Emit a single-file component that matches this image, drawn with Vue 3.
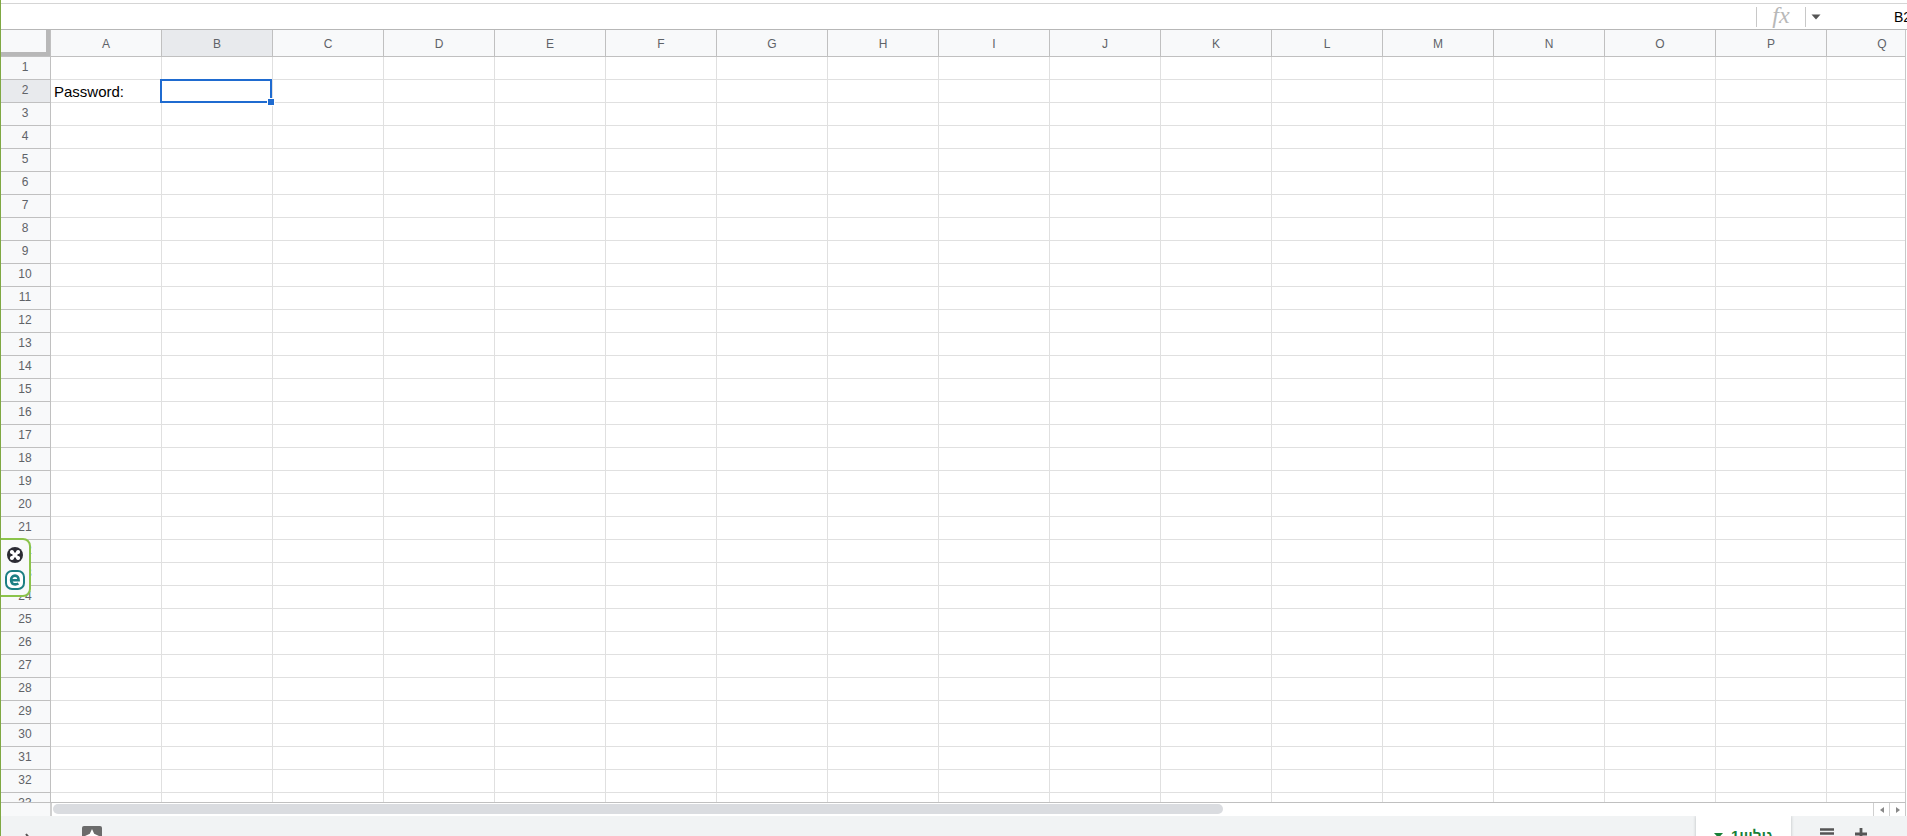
<script setup>
import { ref } from 'vue'

const columns = 'ABCDEFGHIJKLMNOPQ'.split('')
const rows = Array.from({ length: 33 }, (_, i) => i + 1)
const values = { A2: 'Password:' }
const selected = ref({ col: 'B', row: 2 })
const isSelected = (c, r) => selected.value.col === c && selected.value.row === r
</script>

<template>
  <div class="app">
    <header class="formula-bar">
      <input class="formula-input" type="text" aria-label="Formula" />
      <span class="fx">fx</span>
      <div class="name-box">
        <button class="name-toggle" type="button" aria-label="Named ranges">
          <svg width="10" height="6" viewBox="0 0 10 6"><path d="M0.5 0.5h9L5 5.5z" fill="#555" /></svg>
        </button>
        <span class="name">{{ selected.col }}{{ selected.row }}</span>
      </div>
    </header>

    <main class="sheet">
      <table>
        <colgroup>
          <col class="index-col" />
          <col v-for="c in columns" :key="c" class="data-col" />
        </colgroup>
        <thead>
          <tr>
            <td class="corner"></td>
            <th v-for="c in columns" :key="c" scope="col" :class="{ active: c === selected.col }">{{ c }}</th>
          </tr>
        </thead>
        <tbody>
          <tr v-for="r in rows" :key="r">
            <th scope="row" :class="{ active: r === selected.row }">{{ r }}</th>
            <td v-for="c in columns" :key="c" @click="selected = { col: c, row: r }">
              {{ values[c + r] }}
              <span v-if="isSelected(c, r)" class="selection"></span>
            </td>
          </tr>
        </tbody>
      </table>
    </main>

    <div class="scroll-row">
      <div class="scroll-corner"></div>
      <div class="track"><div class="thumb"></div></div>
      <button type="button" aria-label="Scroll left">
        <svg width="4" height="6" viewBox="0 0 4 6"><path d="M4 0v6L0 3z" fill="#888" /></svg>
      </button>
      <button type="button" aria-label="Scroll right">
        <svg width="4" height="6" viewBox="0 0 4 6"><path d="M0 0v6l4-3z" fill="#888" /></svg>
      </button>
    </div>

    <footer class="tabs">
      <button class="icon collapse" type="button" aria-label="Show side panel">
        <svg width="8" height="12" viewBox="0 0 8 12"><path d="M2 1l4 5-4 5" fill="none" stroke="#555" stroke-width="2" /></svg>
      </button>
      <button class="icon explore" type="button" aria-label="Explore">
        <svg width="20" height="20" viewBox="0 0 20 20">
          <path d="M2 0h16a2 2 0 0 1 2 2v16a2 2 0 0 1-2 2H2a2 2 0 0 1-2-2V2a2 2 0 0 1 2-2z" fill="#6b6b6b" />
          <path d="M10 3l2.200 4.800L17 10l-4.800 2.200L10 17l-2.200-4.800L3 10l4.800-2.200z" fill="#fff" />
        </svg>
      </button>
      <span class="spacer"></span>
      <button class="tab" type="button" dir="rtl" lang="he">
        <span>גיליון1</span>
        <svg width="9" height="5" viewBox="0 0 9 5"><path d="M0 0h9L4.500 5z" fill="#188038" /></svg>
      </button>
      <button class="icon all" type="button" aria-label="All sheets">
        <svg width="14" height="15" viewBox="0 0 14 15"><path d="M0 1.500h14M0 5.500h14M0 9.500h14M0 13.500h14" stroke="#555" stroke-width="2.600" /></svg>
      </button>
      <button class="icon add" type="button" aria-label="Add sheet">
        <svg width="12" height="12" viewBox="0 0 12 12"><path d="M6 0v12M0 6h12" stroke="#555" stroke-width="2.800" /></svg>
      </button>
    </footer>

    <aside class="widget">
      <button type="button" aria-label="Close">
        <svg width="16" height="16" viewBox="0 0 16 16">
          <circle cx="8" cy="8" r="8" fill="#2b2b33" />
          <path d="M5 5l6 6M11 5l-6 6" stroke="#fff" stroke-width="3" stroke-linecap="round" />
          <path d="M4.900 4.900h0M11.100 4.900h0M4.900 11.100h0M11.100 11.100h0" stroke="#fff" stroke-width="4" stroke-linecap="round" />
        </svg>
      </button>
      <button type="button" aria-label="Extension">
        <svg width="20" height="20" viewBox="0 0 20 20">
          <rect x="1" y="1" width="18" height="18" rx="6" fill="#fff" stroke="#1b7f83" stroke-width="2" />
          <path d="M6.200 10.200h7.400c0-3-1.400-4.600-3.600-4.600-2.300 0-3.900 1.700-3.900 4.400 0 2.800 1.600 4.400 4.100 4.400 1.300 0 2.300-.3 3.200-.9" fill="none" stroke="#1b7f83" stroke-width="2.600" />
        </svg>
      </button>
    </aside>
  </div>
</template>

<style>
body {
  margin: 0;
}
</style>

<style scoped>
.app {
  position: relative;
  box-sizing: border-box;
  display: flex;
  flex-direction: column;
  height: 100vh;
  overflow: hidden;
  border-left: 1px solid #7fa843;
  background: #fff;
  font-family: "Liberation Sans", Arial, sans-serif;
}
button {
  border: 0;
  padding: 0;
  background: none;
  font: inherit;
  display: flex;
  align-items: center;
  justify-content: center;
}
svg {
  display: block;
  flex: none;
}
.formula-bar {
  flex: none;
  display: flex;
  align-items: center;
  height: 25px;
  margin-top: 3px;
  border-top: 1px solid #d5d5d5;
  border-bottom: 1px solid #b7b7b7;
}
.formula-input {
  flex: 1;
  min-width: 0;
  height: 20px;
  box-sizing: border-box;
  border: 0;
  border-right: 1px solid #c8c8c8;
  padding: 0 8px;
  outline: 0;
  font: inherit;
}
.fx {
  width: 49px;
  height: 20px;
  box-sizing: border-box;
  border-right: 1px solid #c8c8c8;
  text-align: center;
  font: italic 24px/16px "Liberation Serif", serif;
  color: #b8b8b8;
}
.name-box {
  display: flex;
  align-items: center;
  justify-content: space-between;
  width: 101px;
  overflow: hidden;
}
.name-toggle {
  width: 20px;
  height: 20px;
}
.name {
  flex: none;
  margin-right: -4px;
  font-size: 14px;
  color: #000;
}
.sheet {
  flex: 1;
  min-height: 0;
  margin-right: 1px;
  overflow: hidden;
  border-right: 1px solid #c8c8c8;
  border-bottom: 1px solid #c0c0c0;
}
table {
  table-layout: fixed;
  width: 1937px;
  border-collapse: separate;
  border-spacing: 0;
}
.index-col {
  width: 50px;
}
.data-col {
  width: 111px;
}
th,
td {
  box-sizing: border-box;
  height: 23px;
  padding: 0;
  border-right: 1px solid #e0e0e0;
  border-bottom: 1px solid #e0e0e0;
}
th {
  border-color: #c0c0c0;
  background: #f8f9fa;
  color: #5f6368;
  font-size: 12px;
  font-weight: 400;
  line-height: 20px;
}
thead th {
  padding-top: 2px;
}
tbody th {
  padding-right: 1px;
  padding-bottom: 2px;
}
thead th,
thead td {
  height: 27px;
}
.active {
  background: #e8eaed;
}
.corner {
  border-color: #c0c0c0;
  background: #f8f9fa;
  box-shadow: inset -4px -4px 0 #b8b8b8;
}
tbody td {
  position: relative;
  padding: 2px 0 0 3px;
  font-size: 15px;
  line-height: 20px;
  white-space: nowrap;
  color: #000;
}
.selection {
  position: absolute;
  z-index: 1;
  top: -1px;
  left: -2px;
  box-sizing: border-box;
  width: 112px;
  height: 24px;
  border: 2px solid #1f6bd0;
}
.selection::after {
  content: "";
  position: absolute;
  right: -5px;
  bottom: -5px;
  width: 6px;
  height: 6px;
  border: 1px solid #fff;
  background: #1f6bd0;
}
.scroll-row {
  flex: none;
  display: flex;
  height: 13px;
  margin-right: 1px;
  border-right: 1px solid #c8c8c8;
}
.scroll-corner {
  width: 49px;
  border-right: 2px solid #d0d0d0;
  background: #f8f9fa;
}
.track {
  flex: 1;
  padding: 1px 0 2px 1px;
}
.thumb {
  width: 64.3%;
  height: 10px;
  border-radius: 5px;
  background: #dadce0;
}
.scroll-row button {
  width: 16px;
  border-left: 1px solid #d0d0d0;
}
.tabs {
  flex: none;
  display: flex;
  align-items: flex-start;
  height: 20px;
  overflow: hidden;
  background: #f1f3f4;
}
.collapse {
  margin: 17px 0 0 23px;
}
.explore {
  margin: 10px 0 0 50px;
}
.spacer {
  flex: 1;
}
.tab {
  gap: 8px;
  width: 95px;
  height: 38px;
  background: #fff;
  box-shadow: 0 0 3px rgba(60, 64, 67, 0.3);
  color: #188038;
  font-size: 15px;
  font-weight: 700;
}
.all {
  margin: 12px 0 0 29px;
}
.add {
  margin: 12px 40px 0 21px;
}
.widget {
  position: absolute;
  z-index: 2;
  top: 538px;
  left: -1px;
  box-sizing: border-box;
  display: flex;
  flex-direction: column;
  align-items: center;
  gap: 7px;
  width: 31px;
  height: 59px;
  padding: 7px 0 0;
  border: 2px solid #8bc34a;
  border-left-width: 1px;
  border-radius: 0 8px 8px 0;
  background: #f8f9fa;
}
</style>
